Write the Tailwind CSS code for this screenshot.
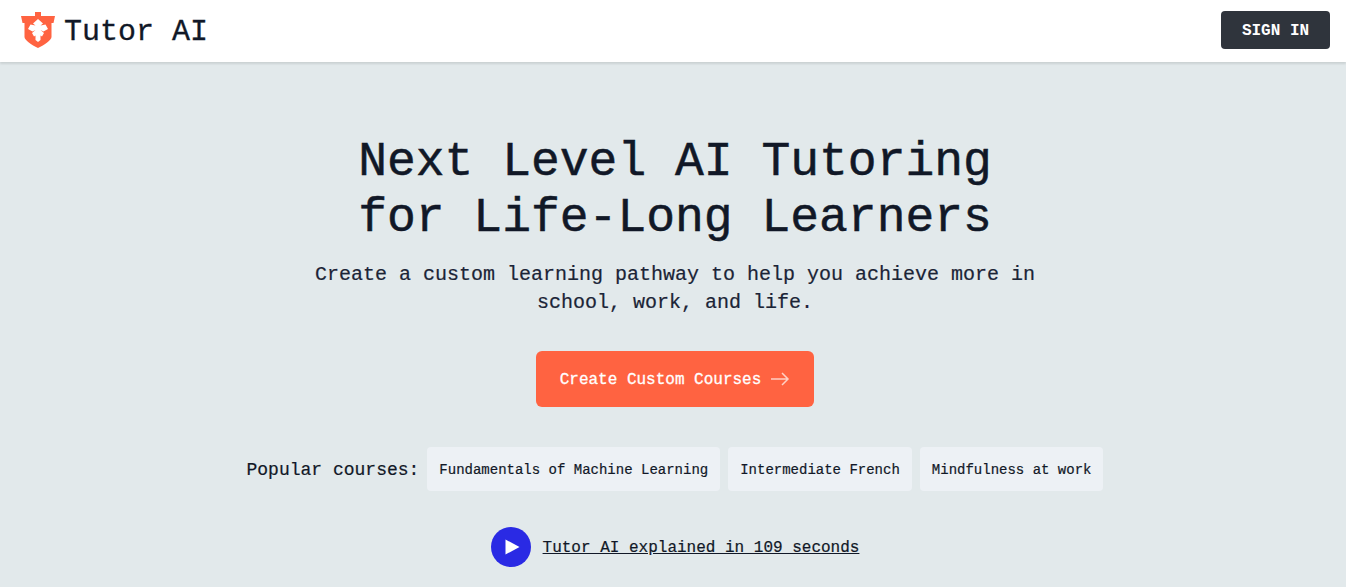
<!DOCTYPE html>
<html lang="en">
<head>
    <meta charset="UTF-8">
    <title>Tutor AI</title>
    <script src="https://cdn.jsdelivr.net/npm/@tailwindcss/browser@4"></script>
</head>
<body class="bg-[#e2e9eb] text-[#111827] font-['Liberation_Mono',monospace] h-[587px] overflow-hidden">
    <header class="relative bg-white h-[62px] flex items-center justify-between pl-5 pr-4 pb-[2px] shadow-[0_2px_2px_rgba(0,0,0,0.1)]">
        <a href="#" class="flex items-center gap-[8px]">
            <svg class="w-9 h-9" viewBox="0 0 36 36">
                <path fill="#ff6341" d="M15 0h6v4h14l-1.500 7h-2v14c0 3-7 8-13.500 11c-6.500-3-13.500-8-13.500-11v-14h-2l-1.500-7h14z"/>
                <polygon fill="#fff" points="18,7 23,11.500 20.500,13.500 25.500,12.500 28,17 23.500,19.500 20.500,18 24,21 22,24.500 20.500,23.500 20.500,28 18,30 15.500,28 15.500,23.500 14,24.500 12,21 15.500,18 12.500,19.500 8,17 10.500,12.500 15.500,13.500 13,11.500"/>
            </svg>
            <span class="mt-[4px] text-[30px] leading-9 text-[#111827] [-webkit-text-stroke:0.3px_#111827]">Tutor AI</span>
        </a>
        <button class="bg-[#2f343c] text-white font-bold text-base rounded-[4px] w-[109px] h-[38px] pt-[2px]">SIGN IN</button>
    </header>
    <main class="flex flex-col items-center pl-[4px]">
        <h1 class="mt-[72px] text-5xl leading-[56px] text-center [-webkit-text-stroke:0.5px_#111827]">Next Level AI Tutoring<br>for Life-Long Learners</h1>
        <p class="mt-[15px] text-xl leading-7 text-center text-[#1b2436] [-webkit-text-stroke:0.2px_#1b2436]">Create a custom learning pathway to help you achieve more in<br>school, work, and life.</p>
        <a href="#" class="mt-[34px] bg-[#ff6341] text-white rounded-md w-[278px] h-[56px] flex items-center justify-center gap-[9px] text-base pt-[2px] [-webkit-text-stroke:0.3px_#fff]">
            Create Custom Courses
            <svg class="w-5 h-5 text-[#ffd0c4] mb-[2px]" viewBox="0 0 20 20" fill="none" stroke="currentColor" stroke-width="1.500"><path d="M1 10h17M12 4l6 6l-6 6"/></svg>
        </a>
        <div class="mt-[40px] flex items-center gap-2">
            <span class="text-lg pt-[2px] [-webkit-text-stroke:0.2px_#111827]">Popular courses:</span>
            <a href="#" class="bg-[#edf1f5] rounded-[4px] h-11 px-3 pt-[2px] flex items-center text-sm [-webkit-text-stroke:0.2px_#111827]">Fundamentals of Machine Learning</a>
            <a href="#" class="bg-[#edf1f5] rounded-[4px] h-11 px-3 pt-[2px] flex items-center text-sm [-webkit-text-stroke:0.2px_#111827]">Intermediate French</a>
            <a href="#" class="bg-[#edf1f5] rounded-[4px] h-11 px-3 pt-[2px] flex items-center text-sm [-webkit-text-stroke:0.2px_#111827]">Mindfulness at work</a>
        </div>
        <a href="#" class="mt-[36px] flex items-center gap-3">
            <span class="w-10 h-10 rounded-full bg-[#2a2ae4] flex items-center justify-center">
                <svg class="w-4 h-4 ml-[3px]" viewBox="0 0 16 16"><path fill="#fff" d="M1.500 0.500v15l14-7.500z"/></svg>
            </span>
            <span class="underline text-base pt-[2px] [-webkit-text-stroke:0.2px_#111827]">Tutor AI explained in 109 seconds</span>
        </a>
    </main>
</body>
</html>
